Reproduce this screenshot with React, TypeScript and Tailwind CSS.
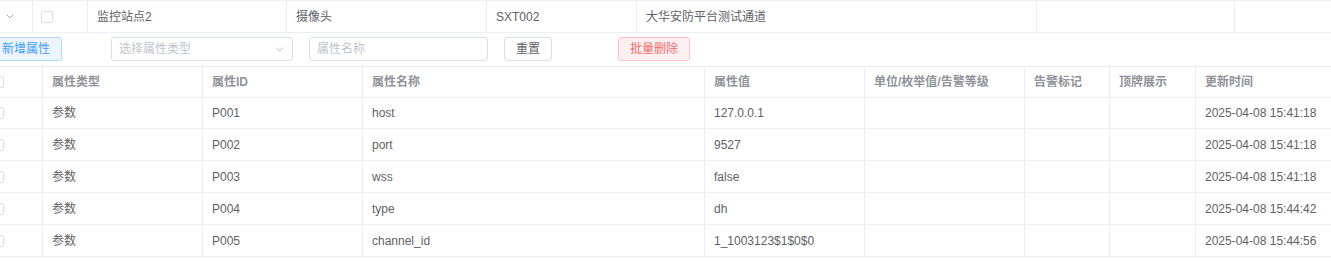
import React from "react";

const font = { fontFamily: '"Liberation Sans", "Noto Sans CJK SC", sans-serif' };

type Row = { type: string; id: string; name: string; value: string; time: string };

const rows: Row[] = [
  { type: "参数", id: "P001", name: "host", value: "127.0.0.1", time: "2025-04-08 15:41:18" },
  { type: "参数", id: "P002", name: "port", value: "9527", time: "2025-04-08 15:41:18" },
  { type: "参数", id: "P003", name: "wss", value: "false", time: "2025-04-08 15:41:18" },
  { type: "参数", id: "P004", name: "type", value: "dh", time: "2025-04-08 15:44:42" },
  { type: "参数", id: "P005", name: "channel_id", value: "1_1003123$1$0$0", time: "2025-04-08 15:44:56" },
];

function Checkbox({ className = "" }: { className?: string }) {
  return <span className={`inline-block h-3 w-3 shrink-0 rounded-[2px] border border-[#dcdfe6] bg-white ${className}`} />;
}

function Chevron({ className = "", color = "#a8abb2" }: { className?: string; color?: string }) {
  return (
    <svg viewBox="0 0 10 6" className={className} fill="none" stroke={color} strokeWidth="1">
      <polyline points="1,0.8 5,4.8 9,0.8" />
    </svg>
  );
}

function ParentRow() {
  const cell = "flex h-full shrink-0 items-center border-r border-[#ebeef5] pl-[9px]";
  return (
    <div className="flex h-[33px] items-center border-y border-[#ebeef5] text-[12px] text-[#606266]">
      <div className="flex h-full w-[33px] shrink-0 items-center border-r border-[#ebeef5] pl-[6px]">
        <Chevron className="h-[5px] w-[8px]" color="#8a8d93" />
      </div>
      <div className="flex h-full w-[55px] shrink-0 items-center border-r border-[#ebeef5] pl-[8px]">
        <Checkbox />
      </div>
      <div className={`${cell} w-[199px] pl-[8px]`}>监控站点2</div>
      <div className={`${cell} w-[200px]`}>摄像头</div>
      <div className={`${cell} w-[150px]`}>SXT002</div>
      <div className={`${cell} w-[400px]`}>大华安防平台测试通道</div>
      <div className={`${cell} w-[198px]`} />
      <div className="h-full flex-1" />
    </div>
  );
}

function Toolbar() {
  return (
    <div className="flex h-[33px] items-start pt-[4px] text-[12px]">
      <button className="-ml-[10px] h-6 rounded-[3px] border border-[#b3d8ff] bg-[#ecf5ff] px-[11px] text-[#409eff]">
        新增属性
      </button>
      <div className="ml-[49px] flex h-6 w-[182px] items-center justify-between rounded-[3px] border border-[#dcdfe6] pl-[7px] pr-[8px] text-[#c0c4cc]">
        <span>选择属性类型</span>
        <Chevron className="h-[5px] w-[9px]" />
      </div>
      <div className="ml-4 flex h-6 w-[179px] items-center rounded-[3px] border border-[#dcdfe6] pl-[7px] text-[#c0c4cc]">
        属性名称
      </div>
      <button className="ml-4 h-6 w-[48px] rounded-[3px] border border-[#dcdfe6] bg-white text-[#606266]">重置</button>
      <button className="ml-[66px] h-6 w-[72px] rounded-[3px] border border-[#fbc4c4] bg-[#fef0f0] text-[#f56c6c]">
        批量删除
      </button>
    </div>
  );
}

const cols = ["w-[160px]", "w-[160px]", "w-[342px]", "w-[160px]", "w-[160px]", "w-[85px]", "w-[86px]"];

function Cell({ w, children }: { w: string; children?: React.ReactNode }) {
  return <div className={`flex h-full shrink-0 items-center border-r border-[#ebeef5] pl-[9px] ${w}`}>{children}</div>;
}

function CheckCell() {
  return (
    <div className="flex h-full w-[43px] shrink-0 items-center border-r border-[#ebeef5]">
      <Checkbox className="-ml-[8px]" />
    </div>
  );
}

function AttrTable() {
  const headers = ["属性类型", "属性ID", "属性名称", "属性值", "单位/枚举值/告警等级", "告警标记", "顶牌展示"];
  return (
    <div className="text-[12px]">
      <div className="flex h-[32px] border-y border-[#ebeef5] font-bold text-[#909399]">
        <CheckCell />
        {headers.map((h, i) => (
          <Cell key={h} w={cols[i]}>
            {h}
          </Cell>
        ))}
        <div className="flex h-full flex-1 items-center pl-[9px]">更新时间</div>
      </div>
      {rows.map((r, idx) => {
        const vals = [r.type, r.id, r.name, r.value, "", "", ""];
        return (
          <div
            key={r.id}
            className={`flex border-b border-[#ebeef5] text-[#606266] ${idx === 0 ? "h-[31px]" : "h-[32px]"}`}
          >
            <CheckCell />
            {vals.map((v, i) => (
              <Cell key={i} w={cols[i]}>
                {v}
              </Cell>
            ))}
            <div className="flex h-full flex-1 items-center pl-[9px]">{r.time}</div>
          </div>
        );
      })}
    </div>
  );
}

export default function App() {
  return (
    <div className="h-[261px] w-[1331px] overflow-hidden bg-white" style={font}>
      <ParentRow />
      <Toolbar />
      <AttrTable />
    </div>
  );
}
